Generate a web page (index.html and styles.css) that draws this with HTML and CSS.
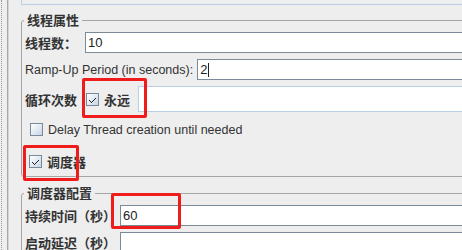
FILE: index.html
```html
<!DOCTYPE html>
<html lang="zh-CN">

<head>
  <meta charset="utf-8" />
  <title>线程组</title>
  <link rel="stylesheet" href="styles.css">
</head>

<body class="tg_page">
  <div class="tg_gutter"></div>
  <div class="tg_main">
    <div class="tg_comment"></div>

    <!-- 线程属性 -->
    <fieldset class="tg_group tg_group_threads">
      <legend class="tg_group_title">线程属性</legend>
      <div class="tg_row tg_row_field">
        <label class="tg_label tg_label_cn">线程数：</label>
        <div class="tg_input tg_input_threads">10</div>
      </div>
      <div class="tg_row tg_row_field">
        <label class="tg_label">Ramp-Up Period (in seconds):</label>
        <div class="tg_input tg_input_ramp">2<span class="tg_caret"></span></div>
      </div>
      <div class="tg_row tg_row_loop">
        <label class="tg_label tg_label_cn">循环次数</label>
        <span class="tg_check tg_check_forever checked"></span>
        <span class="tg_check_text tg_label_cn">永远</span>
        <div class="tg_input tg_input_loop"></div>
      </div>
      <div class="tg_row tg_row_delay">
        <span class="tg_check"></span>
        <span class="tg_check_text">Delay Thread creation until needed</span>
      </div>
      <div class="tg_row tg_row_sched">
        <span class="tg_check checked"></span>
        <span class="tg_check_text tg_label_cn">调度器</span>
      </div>
    </fieldset>

    <!-- 调度器配置 -->
    <fieldset class="tg_group tg_group_sched">
      <legend class="tg_group_title">调度器配置</legend>
      <div class="tg_row tg_row_field">
        <label class="tg_label tg_label_cn tg_label_wide">持续时间（秒）</label>
        <div class="tg_input">60</div>
      </div>
      <div class="tg_row tg_row_field">
        <label class="tg_label tg_label_cn tg_label_wide">启动延迟（秒）</label>
        <div class="tg_input"></div>
      </div>
    </fieldset>
  </div>

  <!-- 标注框 -->
  <div class="mark mark_loop"></div>
  <div class="mark mark_sched"></div>
  <div class="mark mark_duration"></div>
</body>

</html>
```

FILE: styles.css
```css
body {
  margin: 0;
  width: 462px;
  height: 250px;
  overflow: hidden;
  display: flex;
  background-color: #eeeeee;
  font-family: "Liberation Sans", "Noto Sans CJK SC", sans-serif;
  font-size: 12.5px;
  color: #333333;
  position: relative;
}

.tg_gutter {
  flex-shrink: 0;
  width: 5px;
  margin-left: 1px;
  border-left: 1px dotted #9a9a9a;
  border-right: 1px solid #a8a8a8;
}

.tg_main {
  flex-shrink: 0;
  width: 600px;
  border-left: 1px solid #d0d6dc;
  padding-left: 12px;
}

.tg_comment {
  height: 4px;
  border: 1px solid #b8cfe5;
  border-top: 0;
  background-color: #eeeeee;
}

.tg_group {
  margin: 8px 0 0 0;
  padding: 0 3px 5px 3px;
  border: 1px solid #a5a5a5;
  border-radius: 3px;
  min-width: 0;
}

.tg_group_sched {
  margin-top: 9px;
  padding-bottom: 20px;
}

.tg_group_title {
  padding: 0 3px;
  margin-left: -1px;
  font-family: "Noto Sans CJK SC", sans-serif;
  font-weight: bold;
  font-size: 13px;
  line-height: 14px;
  color: #333333;
}

.tg_row {
  display: flex;
  align-items: center;
}

.tg_row_field {
  height: 21px;
  margin-top: 5px;
}

.tg_row_field + .tg_row_field {
  margin-top: 6px;
}

.tg_label {
  white-space: nowrap;
  margin-right: 4px;
}

.tg_label_cn {
  font-family: "Noto Sans CJK SC", sans-serif;
  font-weight: bold;
  font-size: 13px;
}

.tg_label_wide {
  width: 91px;
}

.tg_input {
  flex: 1;
  height: 19px;
  border: 1px solid #7a8a99;
  background-color: #ffffff;
  padding-left: 2px;
  line-height: 19px;
  font-size: 13px;
  color: #222222;
  display: flex;
  align-items: center;
}

.tg_input_threads {
  margin-left: 4px;
}

.tg_caret {
  display: inline-block;
  width: 1px;
  height: 14px;
  background-color: #222222;
  margin-left: 1px;
}

.tg_row_loop {
  height: 26px;
  margin-top: 6px;
}

.tg_check {
  width: 11px;
  height: 11px;
  border: 1px solid #7a8a99;
  background: linear-gradient(135deg, #ffffff, #c5d5e6);
  position: relative;
  flex-shrink: 0;
}

.tg_check.checked::after {
  content: "";
  position: absolute;
  left: 2px;
  top: 3px;
  width: 7px;
  height: 6px;
  background: url("data:image/svg+xml;utf8,<svg xmlns='http://www.w3.org/2000/svg' width='7' height='6'><path d='M0 3h1v1h1v1h1v-1h1v-1h1v-1h1v-1h1v-1h0v2h-1v1h-1v1h-1v1h-1v1h-1v-1h-1v-1h-1z' fill='%23222'/></svg>") no-repeat;
}

.tg_check_forever {
  margin-left: 5px;
}

.tg_check_text {
  margin-left: 5px;
  white-space: nowrap;
}

.tg_input_loop {
  height: 24px;
  border-color: #b8cfe5;
  margin-left: 8px;
}

.tg_row_delay {
  height: 19px;
  margin-top: 8px;
  padding-left: 5px;
}

.tg_row_sched {
  height: 19px;
  margin-top: 13px;
  padding-left: 4px;
}

.mark {
  position: absolute;
  border: 3px solid #f01c1c;
  border-radius: 2px;
}

.mark_loop {
  left: 82px;
  top: 78px;
  width: 59px;
  height: 34px;
}

.mark_sched {
  left: 23px;
  top: 145px;
  width: 50px;
  height: 30px;
}

.mark_duration {
  left: 111px;
  top: 193px;
  width: 64px;
  height: 30px;
}
```
